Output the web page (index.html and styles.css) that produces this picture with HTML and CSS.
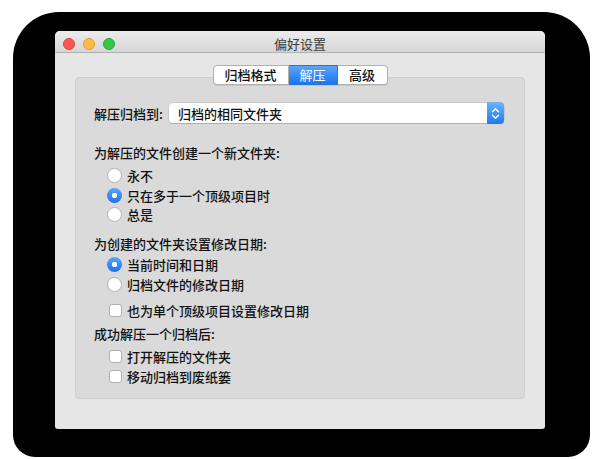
FILE: index.html
```html
<!doctype html>
<html lang="zh">
<head>
    <meta charset="utf-8">
    <title>偏好设置</title>
    <link rel="stylesheet" href="styles.css">
</head>
<body>
    <div class="backdrop">
        <div class="window">
            <div class="titlebar">
                <div class="lights">
                    <span class="light red"></span>
                    <span class="light yellow"></span>
                    <span class="light green"></span>
                </div>
                <div class="title">偏好设置</div>
                <div></div>
            </div>

            <div class="content">
                <div class="tabs">
                    <button type="button" class="tab tab-wide">归档格式</button>
                    <button type="button" class="tab is-selected">解压</button>
                    <button type="button" class="tab">高级</button>
                </div>

                <div class="group">
                    <div class="select-row">
                        <span class="select-label">解压归档到:</span>
                        <div class="select">
                            <span class="select-value">归档的相同文件夹</span>
                            <span class="stepper">
                                <svg width="9" height="13" viewBox="0 0 9 13">
                                    <path d="M1.5 4.8 L4.5 1.8 L7.5 4.8" fill="none" stroke="#fff" stroke-width="1.4" stroke-linecap="round" stroke-linejoin="round"/>
                                    <path d="M1.5 8.2 L4.5 11.2 L7.5 8.2" fill="none" stroke="#fff" stroke-width="1.4" stroke-linecap="round" stroke-linejoin="round"/>
                                </svg>
                            </span>
                        </div>
                    </div>

                    <div class="heading first">为解压的文件创建一个新文件夹:</div>
                    <div class="option radio-row top"><span class="radio"></span>永不</div>
                    <div class="option radio-row"><span class="radio is-on"></span>只在多于一个顶级项目时</div>
                    <div class="option radio-row"><span class="radio"></span>总是</div>

                    <div class="heading second">为创建的文件夹设置修改日期:</div>
                    <div class="option radio-row tight"><span class="radio is-on"></span>当前时间和日期</div>
                    <div class="option radio-row"><span class="radio"></span>归档文件的修改日期</div>
                    <div class="option check-row spaced"><span class="check"></span>也为单个顶级项目设置修改日期</div>

                    <div class="heading third">成功解压一个归档后:</div>
                    <div class="option check-row top"><span class="check"></span>打开解压的文件夹</div>
                    <div class="option check-row"><span class="check"></span>移动归档到废纸篓</div>
                </div>
            </div>
        </div>
    </div>
</body>
</html>
```

FILE: styles.css
```css
body {
    margin: 0;
    background-color: #ffffff;
    font-family: "Noto Sans CJK SC", "Noto Sans", sans-serif;
    font-size: 13px;
    font-weight: 500;
    color: #111111;
}

.backdrop {
    margin: 12px 0 0 13px;
    width: 577px;
    height: 445px;
    padding: 19px 0 0 42px;
    box-sizing: border-box;
    background-color: #000000;
    border-radius: 46px 46px 22px 22px;
}

.window {
    width: 490px;
    height: 398px;
    background-color: #e6e6e6;
    border-radius: 5px 5px 3px 3px;
    overflow: hidden;
}

.titlebar {
    height: 21px;
    display: grid;
    grid-template-columns: 1fr auto 1fr;
    align-items: center;
    background: linear-gradient(#ececec, #d6d6d6);
    border-bottom: 1px solid #b1b1b1;
}

.lights {
    display: flex;
    gap: 8px;
    padding-left: 8px;
    padding-top: 2px;
}

.light {
    width: 12px;
    height: 12px;
    border-radius: 50%;
    box-sizing: border-box;
}

.red { background-color: #fc5753; border: 1px solid #df3e3a; }
.yellow { background-color: #fdbc40; border: 1px solid #de9f32; }
.green { background-color: #33c748; border: 1px solid #27a83a; }

.title {
    color: #3a3a3a;
    font-size: 13px;
    font-weight: 400;
    line-height: 21px;
    padding-top: 2px;
}

.content {
    padding: 0 20px;
}

.tabs {
    display: flex;
    justify-content: center;
    margin-top: 12px;
    position: relative;
    z-index: 1;
}

.tab {
    height: 20px;
    width: 49px;
    padding: 0;
    font-family: inherit;
    font-size: 13px;
    font-weight: 500;
    line-height: 18px;
    color: #111111;
    background-color: #ffffff;
    border: 1px solid #b0b0b0;
    border-left: none;
    box-shadow: 0 1px 0 rgba(0, 0, 0, 0.08);
}

.tab-wide {
    width: 76px;
    border-left: 1px solid #b0b0b0;
    border-radius: 4px 0 0 4px;
}

.tab:last-child {
    width: 50px;
    border-radius: 0 4px 4px 0;
}

.tab.is-selected {
    color: #ffffff;
    font-weight: 400;
    background: linear-gradient(#5aa5fb, #1b74f0);
    border-color: #2a73d8;
}

.group {
    margin-top: -8px;
    height: 322px;
    box-sizing: border-box;
    padding: 25px 20px 0 18px;
    background-color: #dadada;
    border: 1px solid #cdcdcd;
    border-radius: 4px;
}

.select-row {
    display: flex;
    align-items: center;
    height: 20px;
}

.select-label {
    width: 75px;
}

.select {
    flex: 1;
    display: flex;
    align-items: center;
    height: 20px;
    background-color: #ffffff;
    border-radius: 4px;
    box-shadow: 0 0 0 0.5px #b8b8b8, 0 1px 0 #a8a8a8;
}

.select-value {
    flex: 1;
    padding-left: 9px;
}

.stepper {
    width: 17px;
    height: 22px;
    margin-top: -1px;
    margin-bottom: -1px;
    display: flex;
    align-items: center;
    justify-content: center;
    background: linear-gradient(#6cb3fb, #1e7af2);
    border-radius: 0 4px 4px 0;
}

.heading {
    height: 20px;
    line-height: 20px;
}

.heading.first { margin-top: 20px; }
.heading.second { margin-top: 9.5px; }
.heading.third { margin-top: 4px; }

.option {
    display: flex;
    align-items: center;
    height: 19.5px;
}

.radio-row { padding-left: 13px; }
.check-row { padding-left: 15px; }

.option.top { margin-top: 3px; }
.option.tight { margin-top: 1px; }
.option.spaced { margin-top: 6px; height: 20px; }

.radio {
    width: 15px;
    height: 15px;
    margin-right: 5px;
    box-sizing: border-box;
    border-radius: 50%;
    background-color: #ffffff;
    border: 1px solid #b3b3b3;
}

.radio.is-on {
    border: none;
    background: radial-gradient(circle, #ffffff 0 2.5px, transparent 3px),
                linear-gradient(#5aa8fc, #1a72ee);
}

.check {
    width: 13px;
    height: 13px;
    margin-right: 5px;
    box-sizing: border-box;
    border-radius: 3px;
    background-color: #ffffff;
    border: 1px solid #b0b0b0;
}
```
